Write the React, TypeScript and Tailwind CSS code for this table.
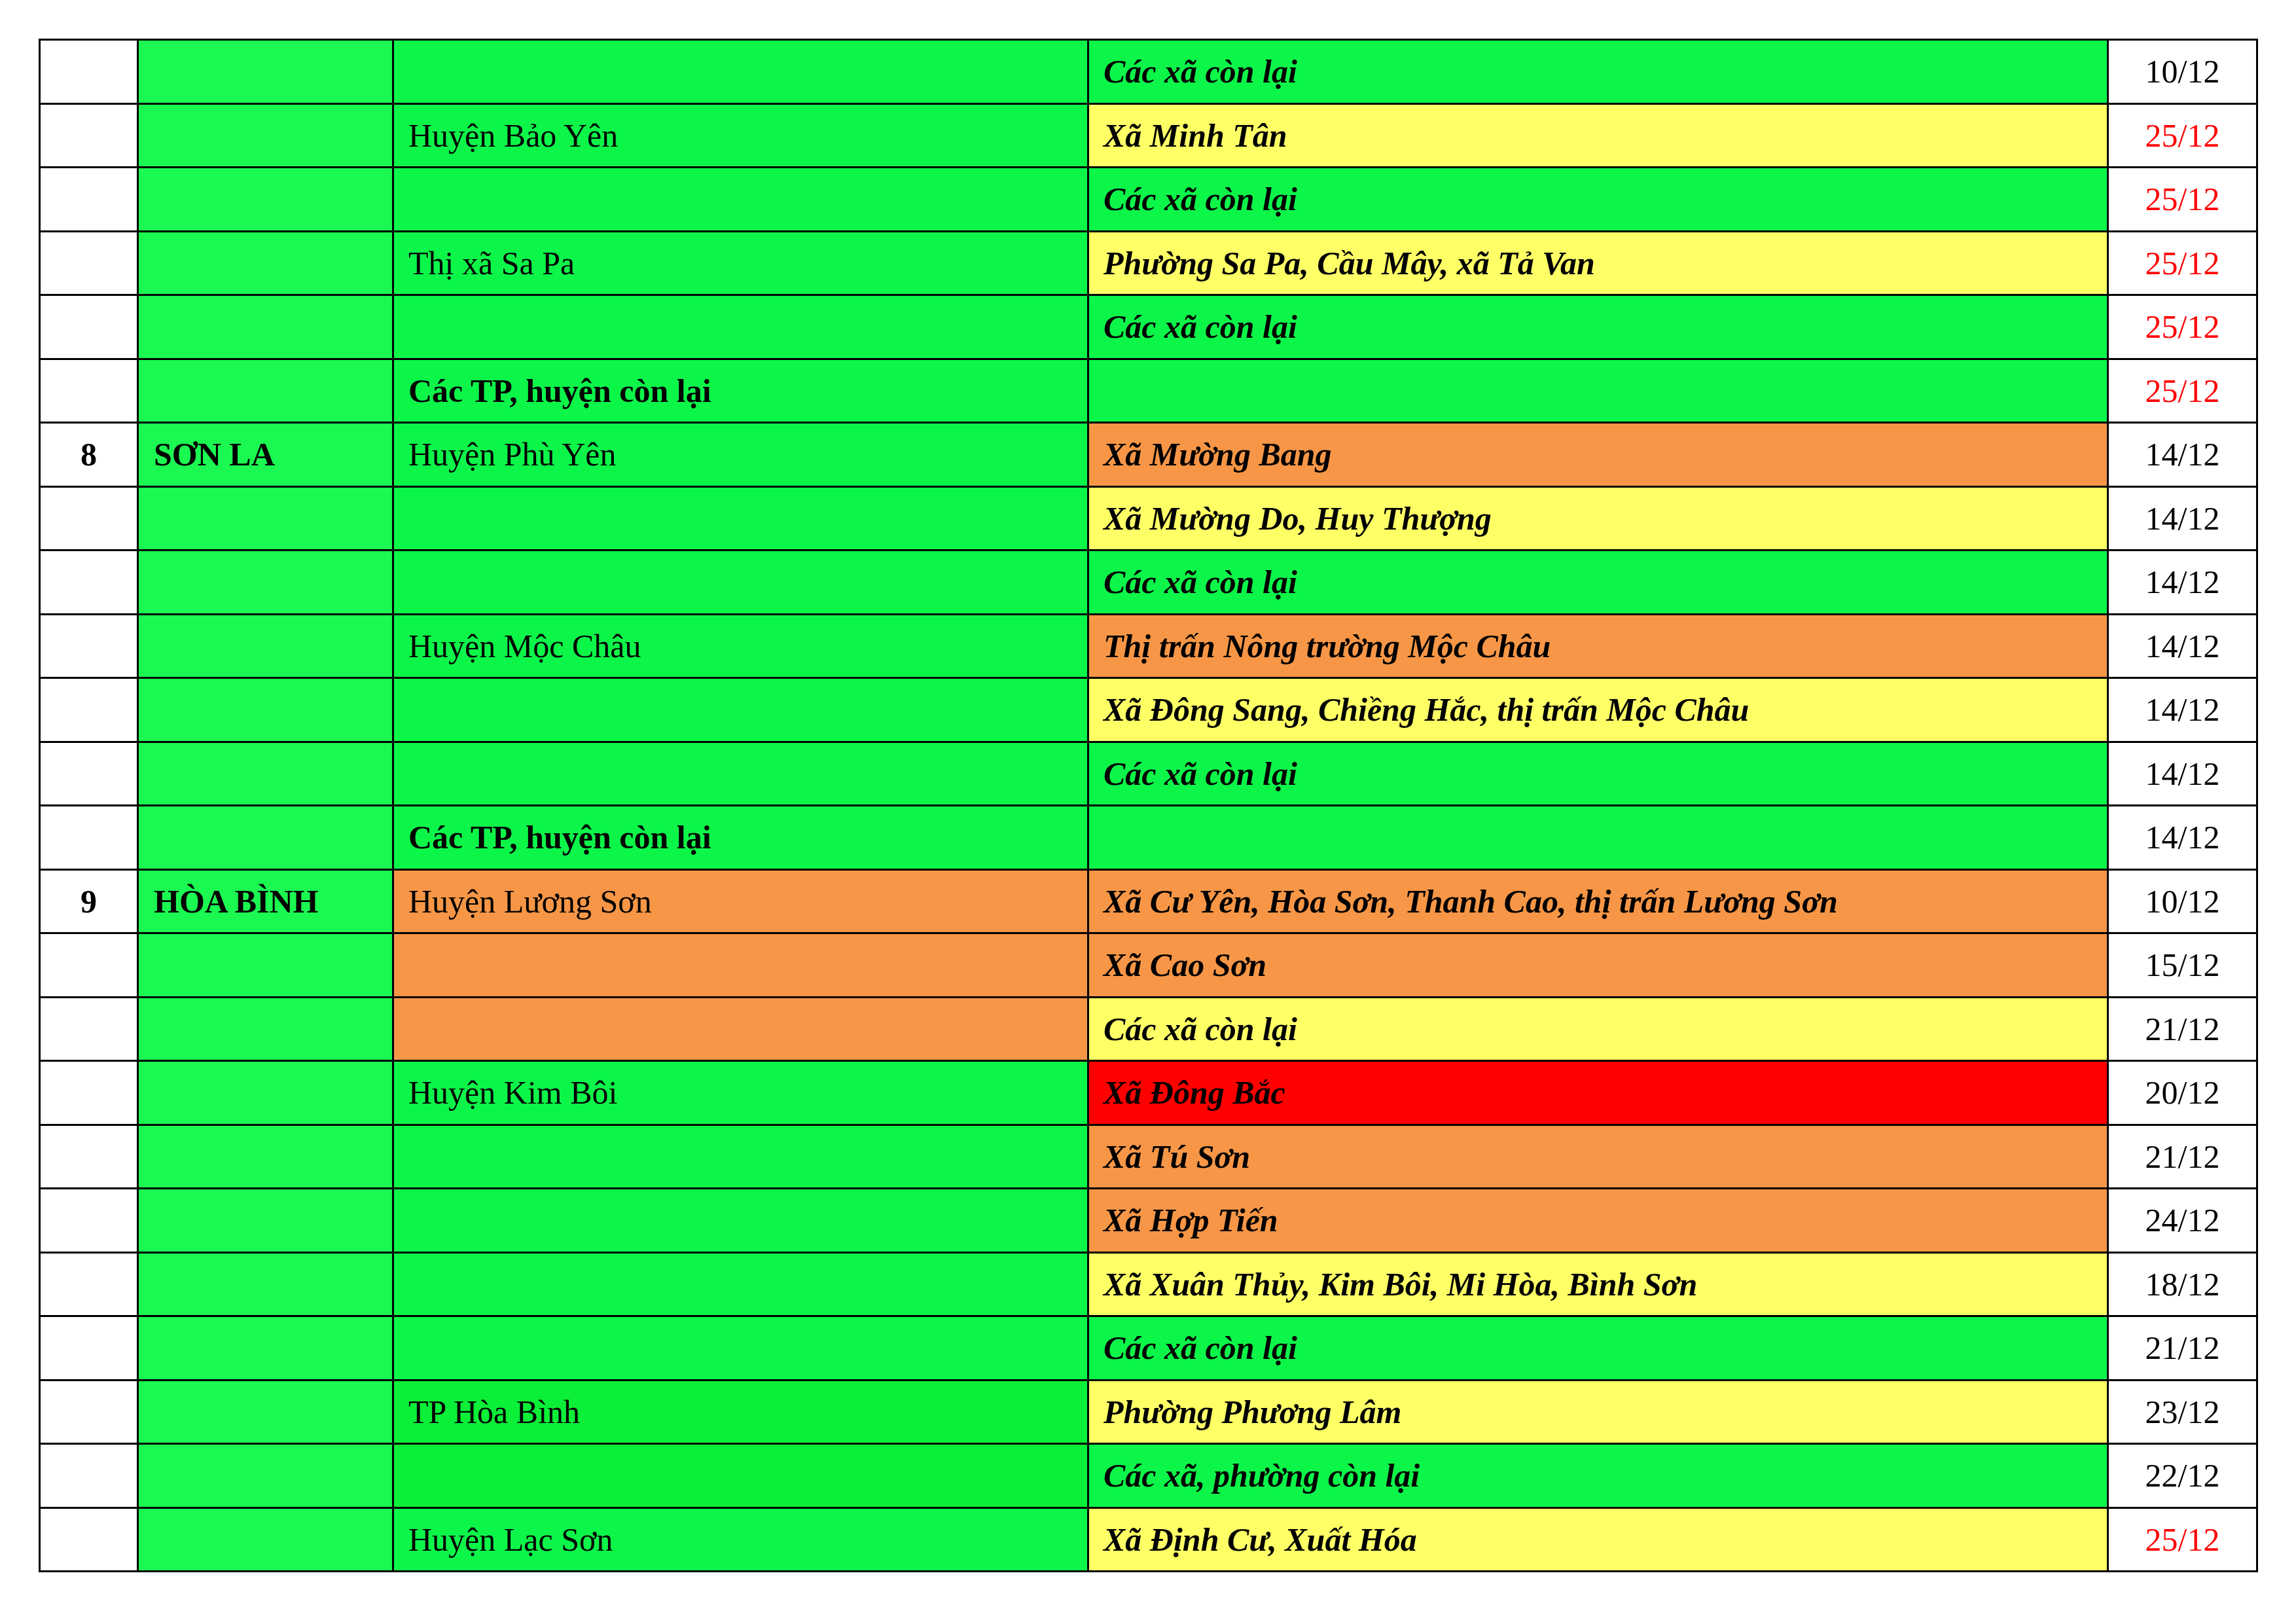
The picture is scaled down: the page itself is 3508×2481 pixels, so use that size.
import React from "react";

type Row = {
  no?: string;
  prov?: string;
  dist?: string;
  distBold?: boolean;
  distBg?: string;
  commune?: string;
  comBg: string;
  date: string;
  red?: boolean;
};

const G = "bg-[#0cf64a]";
const Y = "bg-[#ffff66]";
const O = "bg-[#f79646]";
const R = "bg-[#ff0000]";
const DG = "bg-[#0bef38]";

const rows: Row[] = [
  { commune: "Các xã còn lại", comBg: G, date: "10/12" },
  { dist: "Huyện Bảo Yên", commune: "Xã Minh Tân", comBg: Y, date: "25/12", red: true },
  { commune: "Các xã còn lại", comBg: G, date: "25/12", red: true },
  { dist: "Thị xã Sa Pa", commune: "Phường Sa Pa, Cầu Mây, xã Tả Van", comBg: Y, date: "25/12", red: true },
  { commune: "Các xã còn lại", comBg: G, date: "25/12", red: true },
  { dist: "Các TP, huyện còn lại", distBold: true, comBg: G, date: "25/12", red: true },
  { no: "8", prov: "SƠN LA", dist: "Huyện Phù Yên", commune: "Xã Mường Bang", comBg: O, date: "14/12" },
  { commune: "Xã Mường Do, Huy Thượng", comBg: Y, date: "14/12" },
  { commune: "Các xã còn lại", comBg: G, date: "14/12" },
  { dist: "Huyện Mộc Châu", commune: "Thị trấn Nông trường Mộc Châu", comBg: O, date: "14/12" },
  { commune: "Xã Đông Sang, Chiềng Hắc, thị trấn Mộc Châu", comBg: Y, date: "14/12" },
  { commune: "Các xã còn lại", comBg: G, date: "14/12" },
  { dist: "Các TP, huyện còn lại", distBold: true, comBg: G, date: "14/12" },
  { no: "9", prov: "HÒA BÌNH", dist: "Huyện Lương Sơn", distBg: O, commune: "Xã Cư Yên, Hòa Sơn, Thanh Cao, thị trấn Lương Sơn", comBg: O, date: "10/12" },
  { distBg: O, commune: "Xã Cao Sơn", comBg: O, date: "15/12" },
  { distBg: O, commune: "Các xã còn lại", comBg: Y, date: "21/12" },
  { dist: "Huyện Kim Bôi", commune: "Xã Đông Bắc", comBg: R, date: "20/12" },
  { commune: "Xã Tú Sơn", comBg: O, date: "21/12" },
  { commune: "Xã Hợp Tiến", comBg: O, date: "24/12" },
  { commune: "Xã Xuân Thủy, Kim Bôi, Mi Hòa, Bình Sơn", comBg: Y, date: "18/12" },
  { commune: "Các xã còn lại", comBg: G, date: "21/12" },
  { dist: "TP Hòa Bình", distBg: DG, commune: "Phường Phương Lâm", comBg: Y, date: "23/12" },
  { distBg: DG, commune: "Các xã, phường còn lại", comBg: G, date: "22/12" },
  { dist: "Huyện Lạc Sơn", commune: "Xã Định Cư, Xuất Hóa", comBg: Y, date: "25/12", red: true },
];

export default function App() {
  return (
    <div
      className="w-[3508px] h-[2481px] bg-white pt-[59px] pl-[59px] text-black text-[50px] leading-none"
      style={{ fontFamily: '"Liberation Serif", "Times New Roman", serif' }}
    >
      <table className="table-fixed border-collapse w-[3388px]">
        <colgroup>
          <col className="w-[150px]" />
          <col className="w-[390px]" />
          <col className="w-[1062px]" />
          <col className="w-[1558px]" />
          <col className="w-[228px]" />
        </colgroup>
        <tbody>
          {rows.map((r, i) => (
            <tr key={i} className="h-[97.5px]">
              <td className="border-[3px] border-black bg-white text-center font-bold align-middle p-0">
                {r.no ?? ""}
              </td>
              <td className="border-[3px] border-black bg-[#1bf851] font-bold align-middle pl-[23px] p-0 whitespace-nowrap">
                {r.prov ?? ""}
              </td>
              <td
                className={`border-[3px] border-black align-middle pl-[22px] p-0 whitespace-nowrap ${r.distBg ?? G} ${r.distBold ? "font-bold" : ""}`}
              >
                {r.dist ?? ""}
              </td>
              <td className={`border-[3px] border-black align-middle pl-[22px] p-0 font-bold italic whitespace-nowrap ${r.comBg}`}>
                {r.commune ?? ""}
              </td>
              <td
                className={`border-[3px] border-black bg-white text-center align-middle p-0 ${r.red ? "text-[#ff0000]" : "text-black"}`}
              >
                {r.date}
              </td>
            </tr>
          ))}
        </tbody>
      </table>
    </div>
  );
}
